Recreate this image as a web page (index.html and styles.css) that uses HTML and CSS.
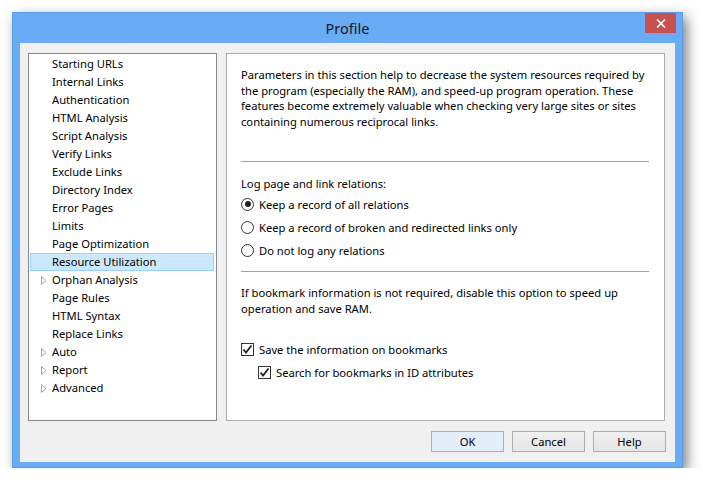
FILE: index.html
```html
<!DOCTYPE html>
<html>
<head>
<meta charset="utf-8">
<link rel="stylesheet" href="styles.css">
</head>
<body>
<div class="window">
  <div class="titlebar">
    <span class="title">Profile</span>
    <div class="close">
      <svg width="10" height="9" viewBox="0 0 10 9"><path d="M1 0.5 L9 8.5 M9 0.5 L1 8.5" stroke="#fff" stroke-width="1.6" fill="none"/></svg>
    </div>
  </div>
  <div class="client">
    <div class="panes">
      <div class="tree">
        <div class="node">Starting URLs</div>
        <div class="node">Internal Links</div>
        <div class="node">Authentication</div>
        <div class="node">HTML Analysis</div>
        <div class="node">Script Analysis</div>
        <div class="node">Verify Links</div>
        <div class="node">Exclude Links</div>
        <div class="node">Directory Index</div>
        <div class="node">Error Pages</div>
        <div class="node">Limits</div>
        <div class="node">Page Optimization</div>
        <div class="node selected">Resource Utilization</div>
        <div class="node"><svg class="arrow" width="6" height="9" viewBox="0 0 6 9"><path d="M0.5 0.5 L5 4.5 L0.5 8.5 Z" fill="none" stroke="#a6a6a6" stroke-width="1"/></svg>Orphan Analysis</div>
        <div class="node">Page Rules</div>
        <div class="node">HTML Syntax</div>
        <div class="node">Replace Links</div>
        <div class="node"><svg class="arrow" width="6" height="9" viewBox="0 0 6 9"><path d="M0.5 0.5 L5 4.5 L0.5 8.5 Z" fill="none" stroke="#a6a6a6" stroke-width="1"/></svg>Auto</div>
        <div class="node"><svg class="arrow" width="6" height="9" viewBox="0 0 6 9"><path d="M0.5 0.5 L5 4.5 L0.5 8.5 Z" fill="none" stroke="#a6a6a6" stroke-width="1"/></svg>Report</div>
        <div class="node"><svg class="arrow" width="6" height="9" viewBox="0 0 6 9"><path d="M0.5 0.5 L5 4.5 L0.5 8.5 Z" fill="none" stroke="#a6a6a6" stroke-width="1"/></svg>Advanced</div>
      </div>
      <div class="page">
        <p class="intro">Parameters in this section help to decrease the system resources required by<br>the program (especially the RAM), and speed-up program operation. These<br>features become extremely valuable when checking very large sites or sites<br>containing numerous reciprocal links.</p>
        <div class="sep sep1"></div>
        <div class="label">Log page and link relations:</div>
        <div class="option"><span class="radio on"></span>Keep a record of all relations</div>
        <div class="option"><span class="radio"></span>Keep a record of broken and redirected links only</div>
        <div class="option"><span class="radio"></span>Do not log any relations</div>
        <div class="sep sep2"></div>
        <p class="note">If bookmark information is not required, disable this option to speed up<br>operation and save RAM.</p>
        <div class="option check1"><span class="check"><svg width="11" height="11" viewBox="0 0 11 11"><path d="M1.5 5.5 L4 8.5 L9.5 1.5" fill="none" stroke="#222" stroke-width="1.8"/></svg></span>Save the information on bookmarks</div>
        <div class="option sub"><span class="check"><svg width="11" height="11" viewBox="0 0 11 11"><path d="M1.5 5.5 L4 8.5 L9.5 1.5" fill="none" stroke="#222" stroke-width="1.8"/></svg></span>Search for bookmarks in ID attributes</div>
      </div>
    </div>
    <div class="buttons">
      <div class="btn default">OK</div>
      <div class="btn">Cancel</div>
      <div class="btn">Help</div>
    </div>
  </div>
</div>
</body>
</html>
```
FILE: styles.css
```css
html, body {
  margin: 0;
  padding: 0;
  background: #ffffff;
}
body {
  font-family: "Noto Sans", "Open Sans", sans-serif;
  font-size: 11.2px;
  color: #000;
}
.window {
  margin: 12px 0 0 12px;
  width: 671px;
  height: 456px;
  box-sizing: border-box;
  background: #6aabf5;
  border: 1px solid #5b9ce6;
  box-shadow: 4px 5px 12px rgba(0,0,0,0.5);
  display: flex;
  flex-direction: column;
}
.titlebar {
  height: 30px;
  position: relative;
  display: flex;
  align-items: center;
  justify-content: center;
}
.title {
  font-size: 14.5px;
  color: #1a1a1a;
  margin-top: -1px;
}
.close {
  position: absolute;
  top: 0;
  right: 6px;
  width: 31px;
  height: 20px;
  background: #c75050;
  display: flex;
  align-items: center;
  justify-content: center;
}
.client {
  margin: 0 7px 5px 7px;
  flex: 1;
  background: #f0f0f0;
  padding: 10px 9px 10px 8px;
  display: flex;
  flex-direction: column;
}
.panes {
  display: flex;
  gap: 9px;
  height: 368px;
}
.tree {
  width: 189px;
  box-sizing: border-box;
  background: #fff;
  border: 1px solid #828790;
  padding-top: 1px;
}
.node {
  height: 18px;
  line-height: 17px;
  margin: 0 2px 0 1px;
  padding-left: 22px;
  box-sizing: border-box;
  position: relative;
  white-space: nowrap;
}
.node.selected {
  background: #cce8ff;
  border: 1px solid #99d1ff;
  padding-left: 21px;
  line-height: 15px;
}
.arrow {
  position: absolute;
  left: 11px;
  top: 5px;
}
.page {
  width: 439px;
  box-sizing: border-box;
  background: #fff;
  border: 1px solid #adadad;
  padding: 13px 15px 0 14px;
}
.intro, .note {
  margin: 0;
  line-height: 15.7px;
  white-space: nowrap;
}
.note {
  line-height: 16px;
  margin-top: 13px;
}
.sep {
  height: 1px;
  background: #a0a0a0;
  width: 408px;
}
.sep1 {
  margin-top: 31px;
  margin-bottom: 14px;
}
.sep2 {
  margin-top: 9px;
}
.label {
  line-height: 16px;
  height: 17px;
}
.option {
  height: 23px;
  display: flex;
  align-items: center;
  white-space: nowrap;
}
.radio {
  width: 11px;
  height: 11px;
  border: 1px solid #333;
  border-radius: 50%;
  margin-right: 5px;
  position: relative;
  flex: none;
}
.radio.on::after {
  content: "";
  position: absolute;
  left: 2.5px;
  top: 2.5px;
  width: 6px;
  height: 6px;
  border-radius: 50%;
  background: #222;
}
.check {
  width: 11px;
  height: 11px;
  border: 1px solid #333;
  margin-right: 5px;
  flex: none;
  display: flex;
  align-items: center;
  justify-content: center;
}
.check1 {
  margin-top: 21px;
}
.sub {
  padding-left: 17px;
}
.buttons {
  display: flex;
  justify-content: flex-end;
  gap: 8px;
  margin-top: 10px;
}
.btn {
  width: 73px;
  height: 21px;
  box-sizing: border-box;
  border: 1px solid #adadad;
  background: linear-gradient(#f0f0f0, #e5e5e5);
  text-align: center;
  line-height: 19px;
}
.btn.default {
  border-color: #8fb5dc;
  background: #e4eef9;
}
```
